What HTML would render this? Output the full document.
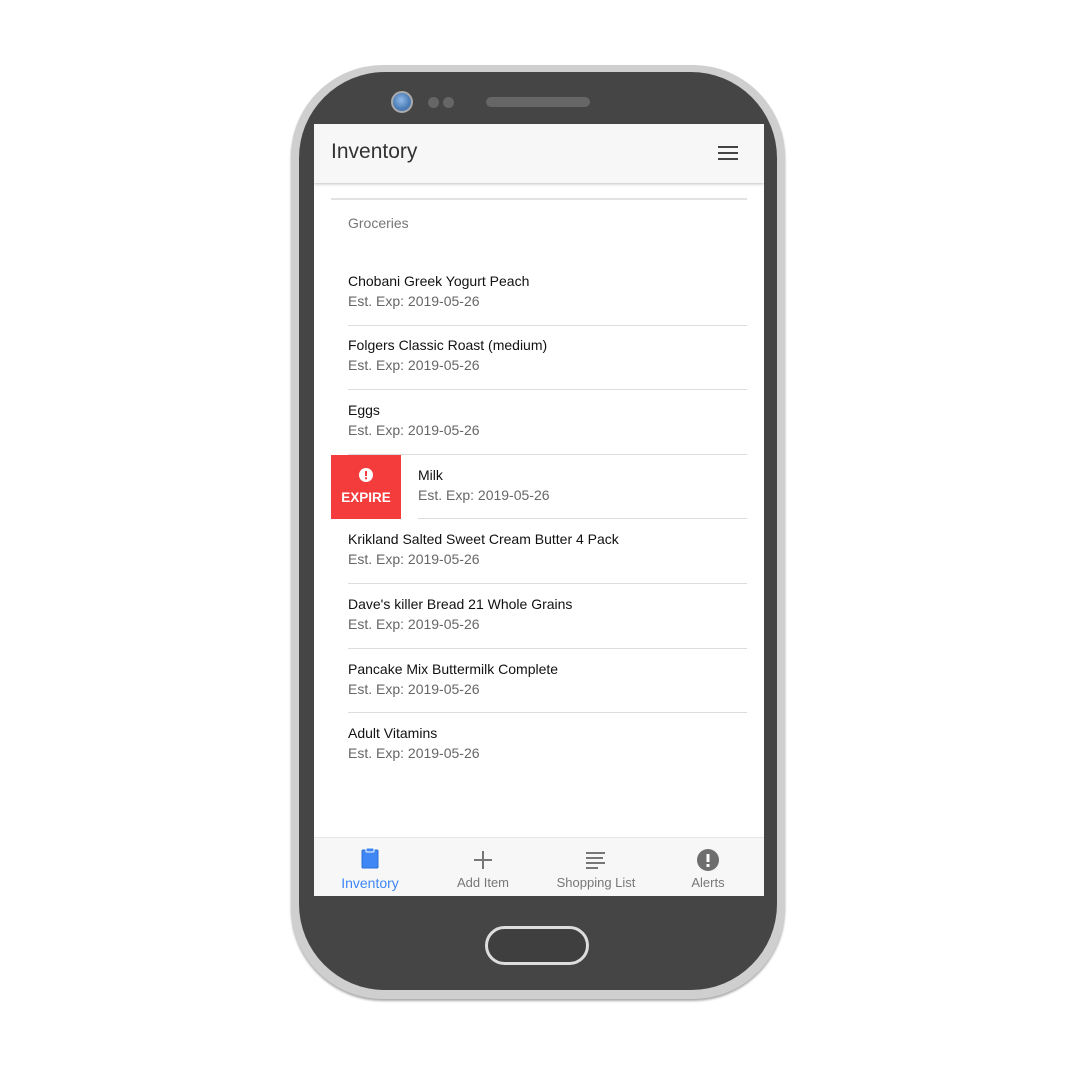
<!DOCTYPE html>
<html><head><style>
*{margin:0;padding:0;box-sizing:border-box}
body{width:1080px;height:1080px;background:#fff;position:relative;font-family:"Liberation Sans",Arial,sans-serif;overflow:hidden}
.outer{position:absolute;left:291px;top:65px;width:494px;height:934px;border-radius:92px;background:#cfcfcf;box-shadow:0 2px 2px #aaa}
.body{position:absolute;left:299px;top:72px;width:478px;height:918px;border-radius:86px;background:#454545}
.screen{position:absolute;left:314px;top:124px;width:450px;height:772px;background:#fff;overflow:hidden}
.hdr{position:absolute;left:0;top:0;width:450px;height:59px;background:#f7f7f7;box-shadow:0 1px 3px rgba(0,0,0,.25)}
.hdr h1{position:absolute;left:17px;top:16px;font-size:21px;font-weight:normal;color:#333}
.menu{position:absolute;left:404px;top:22px;width:20px}
.menu i{display:block;height:2px;background:#444;margin-bottom:4px}
.card{position:absolute;left:17px;top:74px;width:416px;border-top:2px solid #e2e2e2}
.sec{position:absolute;left:34px;top:91px;font-size:14px;color:#777}
.item{position:absolute;left:34px;width:399px;height:65px}
.item .t{position:absolute;top:4px;font-size:14px;color:#111}
.item .s{position:absolute;top:24px;font-size:14px;color:#666}
.div{position:absolute;left:34px;width:399px;height:1px;background:#ddd}
.exp{position:absolute;left:17px;top:331px;width:70px;height:64px;background:#f43c3d;color:#fff;font-size:14px;text-align:center}
.nav{position:absolute;left:0;top:713px;width:450px;height:59px;background:#f7f7f7;border-top:1px solid #e6e6e6}
.nv{position:absolute;top:0;width:112px;text-align:center;font-size:13px;color:#777}
.nv span{position:absolute;top:37px;left:0;width:100%}
.cam{position:absolute;left:391px;top:91px;width:22px;height:22px;border-radius:50%;background:radial-gradient(circle at 45% 40%,#8fb9e8,#4b7bb5 60%);border:2px solid #aaa}
.dot{position:absolute;top:97px;width:11px;height:11px;border-radius:50%;background:#666}
.spk{position:absolute;left:486px;top:97px;width:104px;height:10px;border-radius:5px;background:#666}
.home{position:absolute;left:485px;top:926px;width:104px;height:39px;border-radius:20px;border:3px solid #ddd;background:#3f3f3f}
</style></head><body>
<div class="outer"></div><div class="body"></div>
<div class="cam"></div><div class="dot" style="left:428px"></div><div class="dot" style="left:443px"></div><div class="spk"></div>
<div class="home"></div>
<div class="screen">
<div class="card"></div>
<div class="sec">Groceries</div>
<div class="item" style="top:145px"><div class="t">Chobani Greek Yogurt Peach</div><div class="s">Est. Exp: 2019-05-26</div></div>
<div class="div" style="top:201px"></div>
<div class="item" style="top:209px"><div class="t">Folgers Classic Roast (medium)</div><div class="s">Est. Exp: 2019-05-26</div></div>
<div class="div" style="top:265px"></div>
<div class="item" style="top:274px"><div class="t">Eggs</div><div class="s">Est. Exp: 2019-05-26</div></div>
<div class="div" style="top:330px"></div>
<div class="exp"><svg style="position:absolute;left:28px;top:13px" width="14" height="14" viewBox="0 0 14 14"><circle cx="7" cy="7" r="7" fill="#fff"/><rect x="6" y="3" width="2" height="5" fill="#f43c3d"/><rect x="6" y="9.3" width="2" height="2" fill="#f43c3d"/></svg><div style="position:absolute;top:35px;width:100%;font-weight:bold;font-size:13.5px">EXPIRE</div></div>
<div class="item" style="top:339px;left:104px"><div class="t">Milk</div><div class="s">Est. Exp: 2019-05-26</div></div>
<div class="div" style="top:394px;left:104px;width:329px"></div>
<div class="item" style="top:403px"><div class="t">Krikland Salted Sweet Cream Butter 4 Pack</div><div class="s">Est. Exp: 2019-05-26</div></div>
<div class="div" style="top:459px"></div>
<div class="item" style="top:468px"><div class="t">Dave's killer Bread 21 Whole Grains</div><div class="s">Est. Exp: 2019-05-26</div></div>
<div class="div" style="top:524px"></div>
<div class="item" style="top:533px"><div class="t">Pancake Mix Buttermilk Complete</div><div class="s">Est. Exp: 2019-05-26</div></div>
<div class="div" style="top:588px"></div>
<div class="item" style="top:597px"><div class="t">Adult Vitamins</div><div class="s">Est. Exp: 2019-05-26</div></div>
<div class="hdr"><h1>Inventory</h1><div class="menu"><i></i><i></i><i></i></div></div>
<div class="nav">
<div class="nv" style="left:0;color:#3e87f5;font-size:14px"><svg style="position:absolute;left:47px;top:9px" width="18" height="22" viewBox="0 0 18 22"><rect x="1" y="3" width="16" height="18" rx="1" fill="#3e87f5" stroke="#2a6fd8"/><rect x="5" y="1" width="8" height="4" rx="1" fill="#3e87f5" stroke="#fff"/></svg><span>Inventory</span></div>
<div class="nv" style="left:113px"><svg style="position:absolute;left:47px;top:13px" width="18" height="18"><path d="M9 0V18M0 9H18" stroke="#777" stroke-width="2"/></svg><span>Add Item</span></div>
<div class="nv" style="left:226px"><svg style="position:absolute;left:46px;top:13px" width="19" height="18"><path d="M0 2H19M0 7H17M0 12H19M0 17H12" stroke="#777" stroke-width="2"/></svg><span>Shopping List</span></div>
<div class="nv" style="left:338px"><svg style="position:absolute;left:45px;top:11px" width="22" height="22" viewBox="0 0 22 22"><circle cx="11" cy="11" r="11" fill="#6e6e6e"/><rect x="9.5" y="5" width="3" height="8" fill="#fff"/><rect x="9.5" y="15" width="3" height="3" fill="#fff"/></svg><span>Alerts</span></div>
</div>
</div>
</body></html>
